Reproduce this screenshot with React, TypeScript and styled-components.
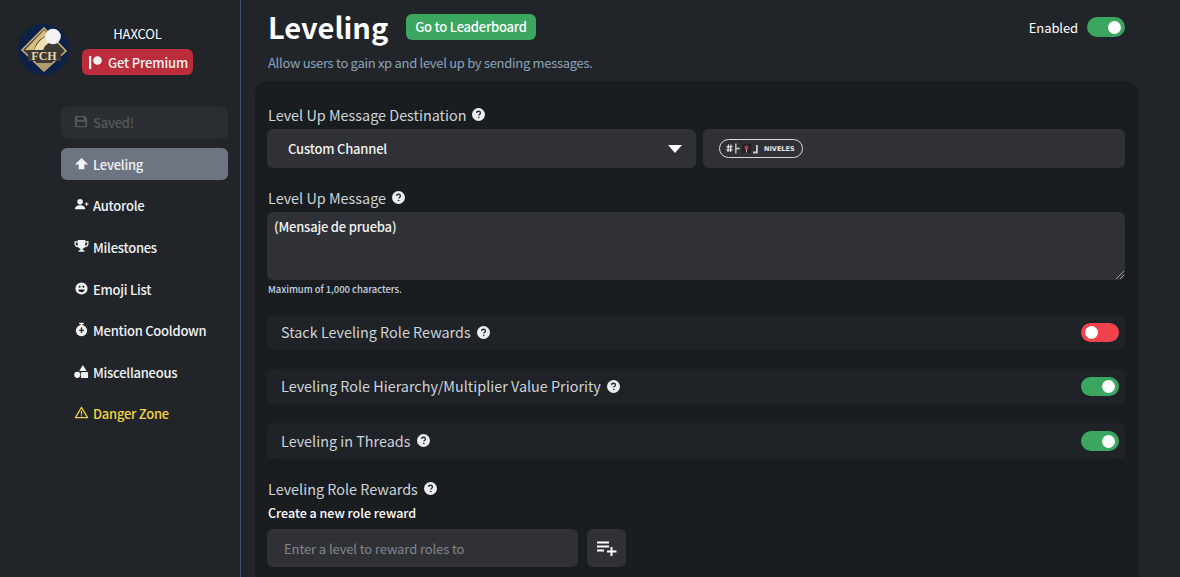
import React from "react";
import styled, { createGlobalStyle } from "styled-components";

const Global = createGlobalStyle`
  html, body { margin: 0; height: 577px; overflow: hidden; background: #212529; }
  body { font-family: "Noto Sans CJK JP", "Noto Sans", sans-serif; color: #fff; }
  * { box-sizing: border-box; }
`;
const Page = styled.div`display: flex; width: 1180px; height: 577px; overflow: hidden;`;
const Sidebar = styled.aside`width: 241px; flex: none; border-right: 1px solid #3f5269; padding: 24px 12px 0 18px;`;
const Profile = styled.div`display: flex; gap: 13px; height: 51px;`;
const Avatar = styled.svg`width: 51px; height: 51px; flex: none;`;
const ProfileInfo = styled.div`display: flex; flex-direction: column; align-items: center; width: 111px;`;
const UserName = styled.div`font-size: 13px; line-height: 20px; letter-spacing: -0.1px; font-weight: 400; height: 25px;`;
const PremiumButton = styled.div`
  width: 111px; height: 26px; border-radius: 6px; background: #bb2d3b; display: flex; align-items: center;
  gap: 6px; padding-left: 7px; font-size: 13px; letter-spacing: -0.15px; font-weight: 500; color: #f4f4f4; white-space: nowrap;
`;
const Nav = styled.nav`margin: 31.700px 0 0 43px; width: 167px; display: flex; flex-direction: column; gap: 9.600px;`;
const NavItem = styled.div<{ $variant?: "saved" | "active" | "danger" }>`
  height: 32px; border-radius: 6px; display: flex; align-items: center; gap: 4px; padding: 0 0 0 13px;
  font-size: 13px; letter-spacing: -0.25px; font-weight: 500; white-space: nowrap;
  color: ${(p) => (p.$variant === "saved" ? "#55585c" : p.$variant === "danger" ? "#f2d43d" : "#f1f2f3")};
  background: ${(p) => (p.$variant === "saved" ? "#2a2d31" : p.$variant === "active" ? "#6e7582" : "transparent")};
  svg { width: 15px; height: 15px; flex: none; margin-bottom: 2px; }
`;
const Main = styled.main`flex: 1; min-width: 0; padding: 0 42px 0 14px;`;
const Header = styled.header`height: 81px; padding: 14px 13px 0 13px; position: relative;`;
const TitleRow = styled.div`display: flex; align-items: center; height: 26px;`;
const Title = styled.h1`margin: 0 0 2px; font-size: 29px; line-height: 24px; font-weight: 700; width: 138px;`;
const GreenButton = styled.div`
  width: 130px; height: 26px; border-radius: 6px; background: #3aa65f; color: #fff; font-size: 13px; letter-spacing: -0.22px; font-weight: 500;
  display: flex; align-items: center; justify-content: center; padding-bottom: 1px;
`;
const EnabledWrap = styled.div`margin-left: auto; display: flex; align-items: center; gap: 9px; font-size: 13px; letter-spacing: -0.1px;`;
const Toggle = styled.div<{ $on: boolean; $tall?: boolean }>`
  width: 38px; height: ${(p) => (p.$tall ? 20 : 19)}px; border-radius: 10px; background: ${(p) => (p.$on ? "#3aa65f" : "#f1424d")};
  display: flex; align-items: center; justify-content: ${(p) => (p.$on ? "flex-end" : "flex-start")}; padding: 0 4px;
  &::after { content: ""; width: 13px; height: 13px; border-radius: 50%; background: #fff; }
`;
const Subtitle = styled.p`margin: 14px 0 0; font-size: 13px; letter-spacing: -0.3px; line-height: 18px; color: #8ea2b8;`;
const Panel = styled.section`background: #1a1d20; border-radius: 12px 12px 0 0; height: 496px; padding: 24px 13px 0 12px;`;
const Label = styled.div`display: flex; align-items: center; gap: 6px; font-size: 14.400px; line-height: 20px; color: #ced4da; height: 20px; padding-left: 1px; padding-bottom: 1px;`;
const Help = styled.svg`width: 13px; height: 13px; flex: none;`;
const SelectRow = styled.div`display: grid; grid-template-columns: 429px 422px; gap: 7px; margin-top: 4px;`;
const Field = styled.div`height: 39px; background: #2f3136; border-radius: 6px; display: flex; align-items: center;`;
const SelectField = styled(Field)`justify-content: space-between; padding: 0 14px 0 21px; font-size: 13px; letter-spacing: -0.2px; font-weight: 500; color: #f1f2f3;`;
const Caret = styled.svg`width: 14px; height: 8px;`;
const ChannelField = styled(Field)`padding-left: 16px;`;
const ChannelPill = styled.div`
  width: 84px; height: 19px; border: 1px solid #d8d8d8; border-radius: 10px; display: flex; align-items: center; padding-left: 6px;
  gap: 4px; font-family: "DejaVu Sans", sans-serif; font-size: 6.500px; font-weight: 700; color: #e8e8e8; letter-spacing: 0;
`;
const Glyphs = styled.svg`width: 34px; height: 11px; flex: none;`;
const LabelMessage = styled(Label)`margin-top: 20px;`;
const TextArea = styled.div`
  margin-top: 4px; width: 858px; height: 68px; background: #2f3136; border-radius: 6px; padding: 5px 7px;
  font-size: 13px; letter-spacing: -0.2px; line-height: 20px; font-weight: 500; color: #f1f2f3; position: relative;
`;
const ResizeGrip = styled.svg`position: absolute; right: 1px; bottom: 1px; width: 8px; height: 8px;`;
const Hint = styled.div`font-size: 9.500px; letter-spacing: -0.05px; line-height: 14px; font-weight: 500; color: #c4d3e0; margin-top: 2px; padding-left: 1px;`;
const Rows = styled.div`display: flex; flex-direction: column; gap: 19px; margin-top: 19px; width: 858px;`;
const SettingRow = styled.div<{ $h?: number }>`
  height: ${(p) => p.$h ?? 35}px; border-radius: 6px; background: #1f2226; display: flex; align-items: center;
  justify-content: space-between; padding: 0 6px 0 13px;
`;
const LabelRewards = styled(Label)`margin-top: 20px;`;
const CreateLabel = styled.div`font-size: 12.500px; line-height: 18px; font-weight: 500; color: #fff; margin-top: 5px; padding-left: 1px;`;
const CreateRow = styled.div`display: flex; gap: 9px; margin-top: 7px;`;
const LevelInput = styled(Field)`width: 311px; height: 38px; padding-left: 17px; font-size: 13px; letter-spacing: -0.1px; color: #82868c;`;
const AddButton = styled(Field)`width: 39px; height: 38px; justify-content: center;`;

const HelpIcon = () => (
  <Help viewBox="0 0 16 16">
    <circle cx="8" cy="8" r="8" fill="#eceff1" />
    <path d="M5.600 6.200C5.700 4.700 6.700 4 8 4c1.400 0 2.400.8 2.400 2 0 1.700-2 1.700-2 3.300" fill="none" stroke="#23262a" strokeWidth="1.600" />
    <circle cx="8.300" cy="11.700" r="1" fill="#23262a" />
  </Help>
);

const fillProps = { viewBox: "0 0 16 16", fill: "currentColor" };

export default function App() {
  return (
    <Page>
      <Global />
      <Sidebar>
        <Profile>
          <Avatar viewBox="0 0 51 51">
            <circle cx="25.500" cy="25.500" r="25.500" fill="#0c2148" />
            <path d="M26 4 L48 27 L26 47 L4 26 Z" fill="#3d3a36" stroke="#c7ae78" strokeWidth="1.600" />
            <path d="M7 26 L26 6 L31 11 C21 14 17 20 16 27 Z" fill="#d9bd7a" />
            <path d="M16 27 C18 20 23 14 31 11 L36 17 C29 19 26 22 25 27 Z" fill="#f0dfb0" />
            <rect x="10" y="26" width="33" height="11" fill="#3a3631" />
            <text x="26" y="36" textAnchor="middle" fontFamily="Liberation Serif, serif" fontSize="12" fontWeight="700" fill="#e6d6ae">FCH</text>
            <path d="M18 39 H34 L26 46 Z" fill="#b29c6b" />
            <circle cx="35" cy="12.500" r="7.800" fill="#f2f2f2" />
          </Avatar>
          <ProfileInfo>
            <UserName>HAXCOL</UserName>
            <PremiumButton>
              <svg width="13" height="13" viewBox="0 0 13 13">
                <rect x="0" y="0" width="2.200" height="13" fill="#f4f4f4" />
                <circle cx="8.500" cy="4.500" r="4.300" fill="#f4f4f4" />
              </svg>
              Get Premium
            </PremiumButton>
          </ProfileInfo>
        </Profile>
        <Nav>
          <NavItem $variant="saved">
            <svg {...fillProps}>
              <path fillRule="evenodd" d="M2.500 2h9L14 4.500v8A1.500 1.500 0 0 1 12.500 14h-10A1.500 1.500 0 0 1 1 12.500v-9A1.500 1.500 0 0 1 2.500 2Zm1 1.300v3h6.500v-3Zm-.5 5v4.400h9V8.300Z" />
            </svg>
            Saved!
          </NavItem>
          <NavItem $variant="active">
            <svg {...fillProps}>
              <path d="M8 2 15 9H11V14H5V9H1Z" />
            </svg>
            Leveling
          </NavItem>
          <NavItem>
            <svg {...fillProps}>
              <circle cx="6.500" cy="5" r="3" />
              <path d="M1 13c0-3 2.500-4.300 5.500-4.300S12 10 12 13Z" />
              <path d="M13 5.500v1.500h-1.500v1H13v1.500h1V8h1.500V7H14V5.500Z" />
            </svg>
            Autorole
          </NavItem>
          <NavItem>
            <svg {...fillProps}>
              <path fillRule="evenodd" d="M4 1h8v1.500h3.500V5c0 2-1.500 3.500-4 3.800-.6.9-1.300 1.400-2.300 1.600V12H11v1.500H5V12h1.800v-1.600c-1-.2-1.700-.7-2.300-1.600C2 8.500.5 7 .5 5V2.500H4Zm0 2.700H1.900V5c0 1.200.8 2 2.300 2.300A9 9 0 0 1 4 3.700Zm8 0c0 1.300 0 2.500-.2 3.600 1.500-.3 2.300-1.100 2.300-2.300V3.700Z" />
            </svg>
            Milestones
          </NavItem>
          <NavItem>
            <svg {...fillProps}>
              <path fillRule="evenodd" d="M8 1.500a6.500 6.500 0 1 1 0 13 6.500 6.500 0 0 1 0-13ZM6 5a1 1 0 1 0 0 2.200A1 1 0 0 0 6 5Zm4 0a1 1 0 1 0 0 2.200A1 1 0 0 0 10 5ZM4.500 9c.4 1.800 1.800 3 3.500 3s3.100-1.200 3.500-3Z" />
            </svg>
            Emoji List
          </NavItem>
          <NavItem>
            <svg {...fillProps}>
              <path fillRule="evenodd" d="M5.500 .8h5V2.200H9V3.300a6 6 0 1 1-2 0V2.200H5.500ZM8 5.500a.8.8 0 0 0-.8.8V8.200H5.500v1.500h1.700v1.700h1.600V9.700h1.700V8.200H8.800V6.300A.8.800 0 0 0 8 5.500Z" />
            </svg>
            Mention Cooldown
          </NavItem>
          <NavItem>
            <svg {...fillProps}>
              <path d="M9.500 1 13.500 7.500H5.500Z" />
              <circle cx="3.500" cy="11.500" r="3.300" />
              <rect x="7.500" y="8.500" width="7.500" height="6.500" rx=".6" />
            </svg>
            Miscellaneous
          </NavItem>
          <NavItem $variant="danger">
            <svg viewBox="0 0 16 16" fill="none" stroke="currentColor" strokeWidth="1.300">
              <path d="M8 2.500 14.500 13.500H1.500Z" strokeLinejoin="round" />
              <path d="M8 6.500v3.500M8 11v1.200" />
            </svg>
            Danger Zone
          </NavItem>
        </Nav>
      </Sidebar>
      <Main>
        <Header>
          <TitleRow>
            <Title>Leveling</Title>
            <GreenButton>Go to Leaderboard</GreenButton>
            <EnabledWrap>
              Enabled
              <Toggle $on $tall />
            </EnabledWrap>
          </TitleRow>
          <Subtitle>Allow users to gain xp and level up by sending messages.</Subtitle>
        </Header>
        <Panel>
          <Label>
            Level Up Message Destination <HelpIcon />
          </Label>
          <SelectRow>
            <SelectField>
              Custom Channel
              <Caret viewBox="0 0 14 8">
                <path d="M0 0H14L7 8Z" fill="#fff" />
              </Caret>
            </SelectField>
            <ChannelField>
              <ChannelPill>
                <Glyphs viewBox="0 0 34 11">
                  <path d="M.5 3.800h6M.5 6.800h6M2.500 1.500 2 9M5 1.500 4.500 9" stroke="#e4e4e4" strokeWidth="1.200" />
                  <path d="M9.800 .5v10M9.800 5.500h4" stroke="#c9c9c9" strokeWidth="1.400" />
                  <rect x="16" y="1" width="9" height="9" fill="#26211f" />
                  <circle cx="20.500" cy="4.500" r="2" fill="#9c4570" />
                  <path d="M20.500 6v3.500" stroke="#bbb" strokeWidth="1" />
                  <path d="M27 8.500h3V2h1.800v8.500H27Z" fill="#c9c9c9" />
                </Glyphs>
                NIVELES
              </ChannelPill>
            </ChannelField>
          </SelectRow>
          <LabelMessage>
            Level Up Message <HelpIcon />
          </LabelMessage>
          <TextArea>
            (Mensaje de prueba)
            <ResizeGrip viewBox="0 0 8 8">
              <path d="M0 8 8 0M4 8 8 4" stroke="#a0a0a0" strokeWidth="1" />
            </ResizeGrip>
          </TextArea>
          <Hint>Maximum of 1,000 characters.</Hint>
          <Rows>
            <SettingRow>
              <Label>
                Stack Leveling Role Rewards <HelpIcon />
              </Label>
              <Toggle $on={false} />
            </SettingRow>
            <SettingRow>
              <Label>
                Leveling Role Hierarchy/Multiplier Value Priority <HelpIcon />
              </Label>
              <Toggle $on />
            </SettingRow>
            <SettingRow $h={36}>
              <Label>
                Leveling in Threads <HelpIcon />
              </Label>
              <Toggle $on $tall />
            </SettingRow>
          </Rows>
          <LabelRewards>
            Leveling Role Rewards <HelpIcon />
          </LabelRewards>
          <CreateLabel>Create a new role reward</CreateLabel>
          <CreateRow>
            <LevelInput>Enter a level to reward roles to</LevelInput>
            <AddButton>
              <svg width="20" height="15" viewBox="0 0 20 15">
                <path d="M0 1.500h12M0 5.500h12M0 9.500h7M14.500 6v9M10 10.500h9.500" stroke="#fff" strokeWidth="2" fill="none" />
              </svg>
            </AddButton>
          </CreateRow>
        </Panel>
      </Main>
    </Page>
  );
}
